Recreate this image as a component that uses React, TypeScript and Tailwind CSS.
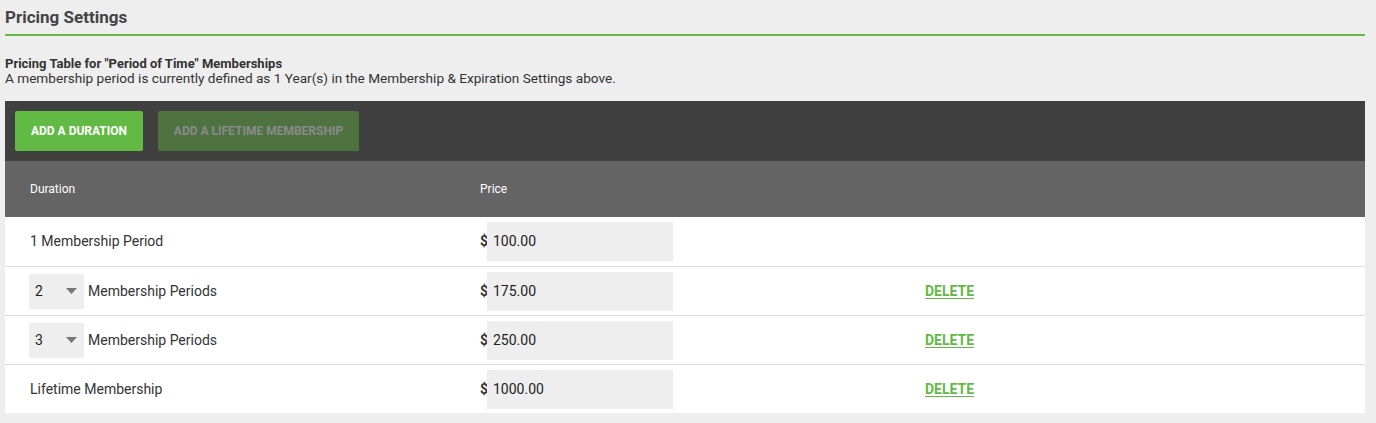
type Row = {
    label: string
    select?: string
    price: string
    canDelete: boolean
}

const rows: Row[] = [
    { label: "1 Membership Period", price: "100.00", canDelete: false },
    { label: "Membership Periods", select: "2", price: "175.00", canDelete: true },
    { label: "Membership Periods", select: "3", price: "250.00", canDelete: true },
    { label: "Lifetime Membership", price: "1000.00", canDelete: true },
]

function PeriodSelect({ value }: { value: string }) {
    return (
        <div className="w-[55px] h-[35px] bg-[#eeeeee] flex items-center justify-between pl-[6px] pr-[7px] mr-1">
            <span className="text-[14px] text-[#222]">{value}</span>
            <svg width="11" height="6" viewBox="0 0 11 6">
                <path d="M0 0 L11 0 L5.5 6 Z" fill="#777" />
            </svg>
        </div>
    )
}

function PricingRow({ row }: { row: Row }) {
    return (
        <div className="h-[49px] flex items-center bg-white border-t border-[#dddddd] first:border-t-0">
            <div className="w-[475px] flex items-center pl-6 text-[14px] text-[#333]">
                {row.select && <PeriodSelect value={row.select} />}
                {row.select ? <span>{row.label}</span> : <span className="pl-px">{row.label}</span>}
            </div>
            <div className="w-[445px] flex items-center">
                <span className="text-[14px] font-bold text-[#333] w-[7px]">$</span>
                <div className="w-[186px] h-[39px] bg-[#eeeeee] flex items-center pl-[6px] text-[14px] text-[#222]">
                    {row.price}
                </div>
            </div>
            {row.canDelete && (
                <a className="text-[14px] font-bold text-[#62ba45] underline underline-offset-2 cursor-pointer">DELETE</a>
            )}
        </div>
    )
}

export default function App() {
    return (
        <div className="min-h-[423px] bg-[#eeeeee] pl-[5px] pr-[11px] font-['Roboto',sans-serif] text-[#333]">
            <h1 className="pt-[5px] text-[17px] font-bold text-[#444] h-[36px] border-b-2 border-[#62ba45]">Pricing Settings</h1>
            <div className="pt-[20px] pb-[15px] text-[13px] leading-[15px]">
                <p className="font-bold text-[#333]">Pricing Table for "Period of Time" Memberships</p>
                <p className="text-[13.6px] text-[#333]">A membership period is currently defined as 1 Year(s) in the Membership &amp; Expiration Settings above.</p>
            </div>
            <div className="bg-[#404040] h-[60px] flex items-center gap-[15px] px-[10px]">
                <button className="h-10 w-[128px] rounded-[2px] bg-[#62ba45] text-white text-[12px] font-bold">ADD A DURATION</button>
                <button className="h-10 w-[201px] rounded-[2px] bg-[#4e7240] text-[#8a8a8a] text-[12px] font-bold">ADD A LIFETIME MEMBERSHIP</button>
            </div>
            <div className="bg-[#646464] h-[56px] flex items-center text-white text-[12px]">
                <div className="w-[475px] pl-[25px]">Duration</div>
                <div>Price</div>
            </div>
            <div>
                {rows.map((row, i) => (
                    <PricingRow key={i} row={row} />
                ))}
            </div>
        </div>
    )
}
